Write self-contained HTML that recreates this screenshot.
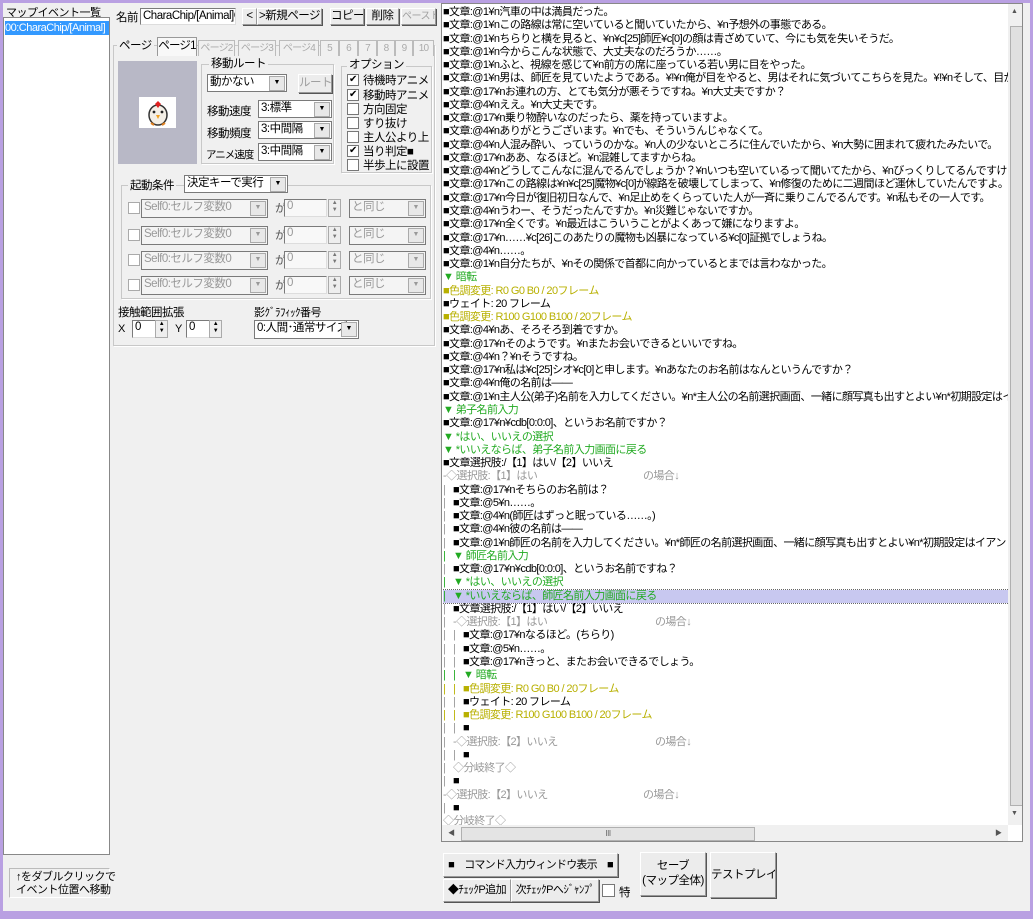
<!DOCTYPE html>
<html><head><meta charset="utf-8"><style>
*{box-sizing:border-box;margin:0;padding:0}
body{width:1033px;height:919px;overflow:hidden;background:#b9a0e2;font-family:"Liberation Sans","Noto Sans CJK JP",sans-serif;font-size:11.5px;letter-spacing:-0.5px;color:#000;position:relative}
.a{position:absolute;white-space:nowrap}
#win{position:absolute;left:3px;top:3px;width:1027px;height:908px;background:#f0f0f0}
.in{background:#fff;border:1px solid #7a7a7a;border-right-color:#ddd;border-bottom-color:#ddd}
.btn{position:absolute;white-space:nowrap;overflow:hidden;background:#ececec;border:1px solid #999;border-top-color:#fff;border-left-color:#fff;box-shadow:1px 1px 0 #555;text-align:center;line-height:15px;font-size:11.5px}
.dis{color:#a0a0a0}
.grp{position:absolute;border:1px solid #c8c8c8;box-shadow:1px 1px 0 #fff}
.lab{position:absolute;background:#f0f0f0;padding:0 2px;line-height:13px;white-space:nowrap}
.dd{position:absolute;white-space:nowrap;background:#fff;border:1px solid #7a7a7a;line-height:15px;padding-left:2px;overflow:hidden}
.dd::after{content:"▼";position:absolute;right:1px;top:1px;width:14px;height:13px;background:#e8e8e8;border:1px solid #aaa;font-size:7px;line-height:12px;text-align:center;color:#000;letter-spacing:0}
.dd.g{color:#999;background:#f4f4f4}
.dd.g::after{color:#999}
.cb{position:absolute;width:12px;height:12px;background:#fff;border:1px solid #777;font-size:10px;line-height:10px;text-align:center}
.sp{position:absolute;width:13px;background:#eee;border:1px solid #aaa;font-size:6px;line-height:7px;text-align:center;color:#777}
.tab{position:absolute;top:37px;height:16px;border:1px solid #bbb;border-bottom:none;background:#f0f0f0;color:#aaa;text-align:center;line-height:15px;font-size:10px;white-space:nowrap;overflow:hidden;letter-spacing:-0.8px}
#list{position:absolute;left:441px;top:3px;width:582px;height:839px;background:#fff;border:1px solid #888;overflow:hidden}
#rows{position:absolute;left:1px;top:2px;width:566px;overflow:hidden}
#rows div{height:13.28px;line-height:13.28px;white-space:nowrap;font-size:11px;letter-spacing:-0.6px;overflow:hidden}
.gr{color:#22aa22}.ol{color:#b8b000}.gy{color:#999}
.p{color:#999;display:inline-block;width:10px}
.pg{color:#22aa22;display:inline-block;width:10px}
.py{color:#b8b000;display:inline-block;width:10px}
.c{display:inline-block}
.sel{background:#c8c8f0;outline:1px dotted #666}
</style></head><body>
<div id="win">
<div class="a" style="left:3px;top:1px;font-size:11px">マップイベント一覧</div>
<div class="a in" style="left:0;top:14px;width:107px;height:838px;border-color:#888"></div>
<div class="a" style="left:2px;top:18px;width:104px;height:14px;background:#3399ff;color:#fff;overflow:hidden;font-size:11px;line-height:14px">00:CharaChip/[Animal]</div>
<div class="a" style="left:6px;top:865px;width:101px;height:30px;border:1px solid #bbb;border-right-color:#fff;border-bottom-color:#fff;font-size:11px;line-height:13px;padding:2px 0 0 6px">↑をダブルクリックで<br>イベント位置へ移動</div>

<div class="a" style="left:113px;top:6px">名前</div>
<div class="a in" style="left:137px;top:5px;width:96px;height:17px;overflow:hidden;line-height:15px;padding-left:2px">CharaChip/[Animal]Chicken</div>
<div class="btn" style="left:239px;top:5px;width:15px;height:17px">&lt;</div>
<div class="btn" style="left:254px;top:5px;width:65px;height:17px">&gt;新規ページ</div>
<div class="btn" style="left:327px;top:5px;width:34px;height:17px">コピー</div>
<div class="btn" style="left:363px;top:5px;width:33px;height:17px">削除</div>
<div class="btn dis" style="left:398px;top:5px;width:35px;height:17px;font-size:10px">ペースト</div>

<div class="grp" style="left:110px;top:42px;width:322px;height:301px"></div>
<div class="lab" style="left:114px;top:37px">ページ</div>
<div class="tab" style="left:154px;top:34px;height:19px;width:40px;color:#000;border-color:#999;background:#f8f8f8;font-size:11.5px;line-height:17px">ページ1</div>
<div class="tab" style="left:195px;width:37px">ページ2</div>
<div class="tab" style="left:235px;width:38px">ページ3</div>
<div class="tab" style="left:276px;width:40px">ページ4</div>
<div class="tab" style="left:317px;width:19px">5</div>
<div class="tab" style="left:336px;width:19px">6</div>
<div class="tab" style="left:355px;width:19px">7</div>
<div class="tab" style="left:374px;width:18px">8</div>
<div class="tab" style="left:392px;width:18px">9</div>
<div class="tab" style="left:410px;width:21px">10</div>

<div class="a" style="left:115px;top:58px;width:79px;height:103px;background:#b8b8c6"></div>
<div class="a" style="left:136px;top:94px;width:37px;height:31px;background:#fff"></div>
<svg class="a" style="left:142px;top:96px" width="26" height="28" viewBox="0 0 26 28"><ellipse cx="13" cy="16" rx="9" ry="10" fill="#f4efe6" stroke="#333" stroke-width="1.5"/><path d="M10 5 L13 2 L16 5 L13 9Z" fill="#e02020"/><path d="M11 16 L15 16 L13 20Z" fill="#f0a020"/><circle cx="9" cy="13" r="1.4" fill="#222"/><circle cx="17" cy="13" r="1.4" fill="#222"/><path d="M6 24 L9 26 M20 24 L17 26" stroke="#e08020" stroke-width="2"/></svg>

<div class="grp" style="left:198px;top:61px;width:133px;height:100px"></div>
<div class="lab" style="left:206px;top:55px">移動ルート</div>
<div class="dd" style="left:204px;top:71px;width:80px;height:18px">動かない</div>
<div class="btn dis" style="left:295px;top:71px;width:34px;height:19px;line-height:17px">ルート</div>
<div class="a" style="left:204px;top:100px">移動速度</div>
<div class="dd" style="left:255px;top:97px;width:74px;height:18px">3:標準</div>
<div class="a" style="left:204px;top:122px">移動頻度</div>
<div class="dd" style="left:255px;top:118px;width:74px;height:18px">3:中間隔</div>
<div class="a" style="left:203px;top:144px;font-size:10.5px;letter-spacing:-1px">アニメ速度</div>
<div class="dd" style="left:255px;top:140px;width:74px;height:18px">3:中間隔</div>

<div class="grp" style="left:338px;top:63px;width:91px;height:107px"></div>
<div class="lab" style="left:344px;top:56px">オプション</div>
<div class="cb" style="left:344px;top:71px">✔</div><div class="a" style="left:360px;top:69px">待機時アニメ</div>
<div class="cb" style="left:344px;top:86px">✔</div><div class="a" style="left:360px;top:84px">移動時アニメ</div>
<div class="cb" style="left:344px;top:100px"></div><div class="a" style="left:360px;top:98px">方向固定</div>
<div class="cb" style="left:344px;top:114px"></div><div class="a" style="left:360px;top:112px">すり抜け</div>
<div class="cb" style="left:344px;top:128px"></div><div class="a" style="left:360px;top:126px">主人公より上</div>
<div class="cb" style="left:344px;top:142px">✔</div><div class="a" style="left:360px;top:140px">当り判定■</div>
<div class="cb" style="left:344px;top:156px"></div><div class="a" style="left:360px;top:154px">半歩上に設置</div>

<div class="grp" style="left:118px;top:182px;width:310px;height:114px"></div>
<div class="lab" style="left:125px;top:177px">起動条件</div>
<div class="dd" style="left:181px;top:172px;width:104px;height:18px">決定キーで実行</div>
<div class="cb" style="left:125px;top:199px;border-color:#aaa"></div><div class="dd g" style="left:138px;top:196px;width:127px;height:19px">Self0:セルフ変数0</div><div class="a" style="left:272px;top:197px;color:#555">が</div><div class="a in" style="left:281px;top:196px;width:43px;height:18px;color:#999;padding-left:2px;background:#f8f8f8">0</div><div class="sp" style="left:325px;top:196px;height:18px">▲<br>▼</div><div class="dd g" style="left:346px;top:196px;width:77px;height:19px">と同じ</div>
<div class="cb" style="left:125px;top:226px;border-color:#aaa"></div><div class="dd g" style="left:138px;top:223px;width:127px;height:19px">Self0:セルフ変数0</div><div class="a" style="left:272px;top:224px;color:#555">が</div><div class="a in" style="left:281px;top:223px;width:43px;height:18px;color:#999;padding-left:2px;background:#f8f8f8">0</div><div class="sp" style="left:325px;top:223px;height:18px">▲<br>▼</div><div class="dd g" style="left:346px;top:223px;width:77px;height:19px">と同じ</div>
<div class="cb" style="left:125px;top:251px;border-color:#aaa"></div><div class="dd g" style="left:138px;top:248px;width:127px;height:19px">Self0:セルフ変数0</div><div class="a" style="left:272px;top:249px;color:#555">が</div><div class="a in" style="left:281px;top:248px;width:43px;height:18px;color:#999;padding-left:2px;background:#f8f8f8">0</div><div class="sp" style="left:325px;top:248px;height:18px">▲<br>▼</div><div class="dd g" style="left:346px;top:248px;width:77px;height:19px">と同じ</div>
<div class="cb" style="left:125px;top:276px;border-color:#aaa"></div><div class="dd g" style="left:138px;top:273px;width:127px;height:19px">Self0:セルフ変数0</div><div class="a" style="left:272px;top:274px;color:#555">が</div><div class="a in" style="left:281px;top:273px;width:43px;height:18px;color:#999;padding-left:2px;background:#f8f8f8">0</div><div class="sp" style="left:325px;top:273px;height:18px">▲<br>▼</div><div class="dd g" style="left:346px;top:273px;width:77px;height:19px">と同じ</div>

<div class="a" style="left:115px;top:301px">接触範囲拡張</div>
<div class="a" style="left:115px;top:320px;font-size:11px">X</div>
<div class="a in" style="left:129px;top:317px;width:24px;height:18px;padding-left:2px">0</div><div class="sp" style="left:152px;top:317px;height:18px;color:#000">▲<br>▼</div>
<div class="a" style="left:172px;top:320px;font-size:11px">Y</div>
<div class="a in" style="left:183px;top:317px;width:24px;height:18px;padding-left:2px">0</div><div class="sp" style="left:206px;top:317px;height:18px;color:#000">▲<br>▼</div>
<div class="a" style="left:251px;top:301px;font-size:11px">影ｸﾞﾗﾌｨｯｸ番号</div>
<div class="dd" style="left:251px;top:317px;width:105px;height:19px">0:人間･通常サイズ</div>

<div class="btn" style="left:440px;top:850px;width:175px;height:24px;line-height:22px;font-size:11px;letter-spacing:-0.8px">■　コマンド入力ウィンドウ表示　■</div>
<div class="btn" style="left:440px;top:876px;width:68px;height:23px;line-height:21px;font-size:11px">◆ﾁｪｯｸP追加</div>
<div class="btn" style="left:508px;top:876px;width:88px;height:23px;line-height:21px;font-size:11px">次ﾁｪｯｸPへｼﾞｬﾝﾌﾟ</div>
<div class="cb" style="left:599px;top:881px;width:13px;height:13px"></div>
<div class="a" style="left:616px;top:881px">特</div>
<div class="btn" style="left:637px;top:849px;width:66px;height:44px;line-height:15px;padding-top:6px">セーブ<br>(マップ全体)</div>
<div class="btn" style="left:707px;top:849px;width:66px;height:46px;line-height:44px">テストプレイ</div>
</div>

<div id="list">
<div id="rows">
<div>■文章:@1¥n汽車の中は満員だった。</div>
<div>■文章:@1¥nこの路線は常に空いていると聞いていたから、¥n予想外の事態である。</div>
<div>■文章:@1¥nちらりと横を見ると、¥n¥c[25]師匠¥c[0]の顔は青ざめていて、今にも気を失いそうだ。</div>
<div>■文章:@1¥n今からこんな状態で、大丈夫なのだろうか……。</div>
<div>■文章:@1¥nふと、視線を感じて¥n前方の席に座っている若い男に目をやった。</div>
<div>■文章:@1¥n男は、師匠を見ていたようである。¥!¥n俺が目をやると、男はそれに気づいてこちらを見た。¥!¥nそして、目が合うと話</div>
<div>■文章:@17¥nお連れの方、とても気分が悪そうですね。¥n大丈夫ですか？</div>
<div>■文章:@4¥nええ。¥n大丈夫です。</div>
<div>■文章:@17¥n乗り物酔いなのだったら、薬を持っていますよ。</div>
<div>■文章:@4¥nありがとうございます。¥nでも、そういうんじゃなくて。</div>
<div>■文章:@4¥n人混み酔い、っていうのかな。¥n人の少ないところに住んでいたから、¥n大勢に囲まれて疲れたみたいで。</div>
<div>■文章:@17¥nああ、なるほど。¥n混雑してますからね。</div>
<div>■文章:@4¥nどうしてこんなに混んでるんでしょうか？¥nいつも空いているって聞いてたから、¥nびっくりしてるんですけど。</div>
<div>■文章:@17¥nこの路線は¥n¥c[25]魔物¥c[0]が線路を破壊してしまって、¥n修復のために二週間ほど運休していたんですよ。</div>
<div>■文章:@17¥n今日が復旧初日なんで、¥n足止めをくらっていた人が一斉に乗りこんでるんです。¥n私もその一人です。</div>
<div>■文章:@4¥nうわー、そうだったんですか。¥n災難じゃないですか。</div>
<div>■文章:@17¥n全くです。¥n最近はこういうことがよくあって嫌になりますよ。</div>
<div>■文章:@17¥n……¥c[26]このあたりの魔物も凶暴になっている¥c[0]証拠でしょうね。</div>
<div>■文章:@4¥n……。</div>
<div>■文章:@1¥n自分たちが、¥nその関係で首都に向かっているとまでは言わなかった。</div>
<div class="gr">▼ 暗転</div>
<div class="ol">■色調変更: R0 G0 B0 / 20フレーム</div>
<div>■ウェイト: 20 フレーム</div>
<div class="ol">■色調変更: R100 G100 B100 / 20フレーム</div>
<div>■文章:@4¥nあ、そろそろ到着ですか。</div>
<div>■文章:@17¥nそのようです。¥nまたお会いできるといいですね。</div>
<div>■文章:@4¥n？¥nそうですね。</div>
<div>■文章:@17¥n私は¥c[25]シオ¥c[0]と申します。¥nあなたのお名前はなんというんですか？</div>
<div>■文章:@4¥n俺の名前は——</div>
<div>■文章:@1¥n主人公(弟子)名前を入力してください。¥n*主人公の名前選択画面、一緒に顔写真も出すとよい¥n*初期設定はイアン</div>
<div class="gr">▼ 弟子名前入力</div>
<div>■文章:@17¥n¥cdb[0:0:0]、というお名前ですか？</div>
<div class="gr">▼ *はい、いいえの選択</div>
<div class="gr">▼ *いいえならば、弟子名前入力画面に戻る</div>
<div>■文章選択肢:/【1】はい/【2】いいえ</div>
<div class="gy"><span class="c" style="width:200px">-◇選択肢:【1】はい</span>の場合↓</div>
<div><span class="p">|</span>■文章:@17¥nそちらのお名前は？</div>
<div><span class="p">|</span>■文章:@5¥n……。</div>
<div><span class="p">|</span>■文章:@4¥n(師匠はずっと眠っている……。)</div>
<div><span class="p">|</span>■文章:@4¥n彼の名前は——</div>
<div><span class="p">|</span>■文章:@1¥n師匠の名前を入力してください。¥n*師匠の名前選択画面、一緒に顔写真も出すとよい¥n*初期設定はイアン</div>
<div class="gr"><span class="pg">|</span>▼ 師匠名前入力</div>
<div><span class="p">|</span>■文章:@17¥n¥cdb[0:0:0]、というお名前ですね？</div>
<div class="gr"><span class="pg">|</span>▼ *はい、いいえの選択</div>
<div class="gr sel"><span class="pg">|</span>▼ *いいえならば、師匠名前入力画面に戻る</div>
<div><span class="p">|</span>■文章選択肢:/【1】はい/【2】いいえ</div>
<div class="gy"><span class="p">|</span><span class="c" style="width:202px">-◇選択肢:【1】はい</span>の場合↓</div>
<div><span class="p">|</span><span class="p">|</span>■文章:@17¥nなるほど。(ちらり)</div>
<div><span class="p">|</span><span class="p">|</span>■文章:@5¥n……。</div>
<div><span class="p">|</span><span class="p">|</span>■文章:@17¥nきっと、またお会いできるでしょう。</div>
<div class="gr"><span class="pg">|</span><span class="pg">|</span>▼ 暗転</div>
<div class="ol"><span class="py">|</span><span class="py">|</span>■色調変更: R0 G0 B0 / 20フレーム</div>
<div><span class="p">|</span><span class="p">|</span>■ウェイト: 20 フレーム</div>
<div class="ol"><span class="py">|</span><span class="py">|</span>■色調変更: R100 G100 B100 / 20フレーム</div>
<div><span class="p">|</span><span class="p">|</span>■</div>
<div class="gy"><span class="p">|</span><span class="c" style="width:202px">-◇選択肢:【2】いいえ</span>の場合↓</div>
<div><span class="p">|</span><span class="p">|</span>■</div>
<div class="gy"><span class="p">|</span>◇分岐終了◇</div>
<div><span class="p">|</span>■</div>
<div class="gy"><span class="c" style="width:200px">-◇選択肢:【2】いいえ</span>の場合↓</div>
<div><span class="p">|</span>■</div>
<div class="gy">◇分岐終了◇</div>
</div>
<div class="a" style="left:566px;top:0;width:15px;height:821px;background:#f0f0f0"></div>
<div class="a" style="left:569px;top:4px;font-size:7px;color:#555">▲</div>
<div class="a" style="left:568px;top:22px;width:13px;height:780px;background:#e0e0e0;border:1px solid #b0b0b0"></div>
<div class="a" style="left:569px;top:806px;font-size:7px;color:#555">▼</div>
<div class="a" style="left:0;top:821px;width:566px;height:16px;background:#f0f0f0"></div>
<div class="a" style="left:6px;top:824px;font-size:7px;color:#555">◀</div>
<div class="a" style="left:19px;top:823px;width:294px;height:14px;background:#e4e4e4;border:1px solid #b0b0b0;font-size:8px;line-height:12px;text-align:center;color:#666">III</div>
<div class="a" style="left:553px;top:824px;font-size:7px;color:#555">▶</div>
</div>
</body></html>
